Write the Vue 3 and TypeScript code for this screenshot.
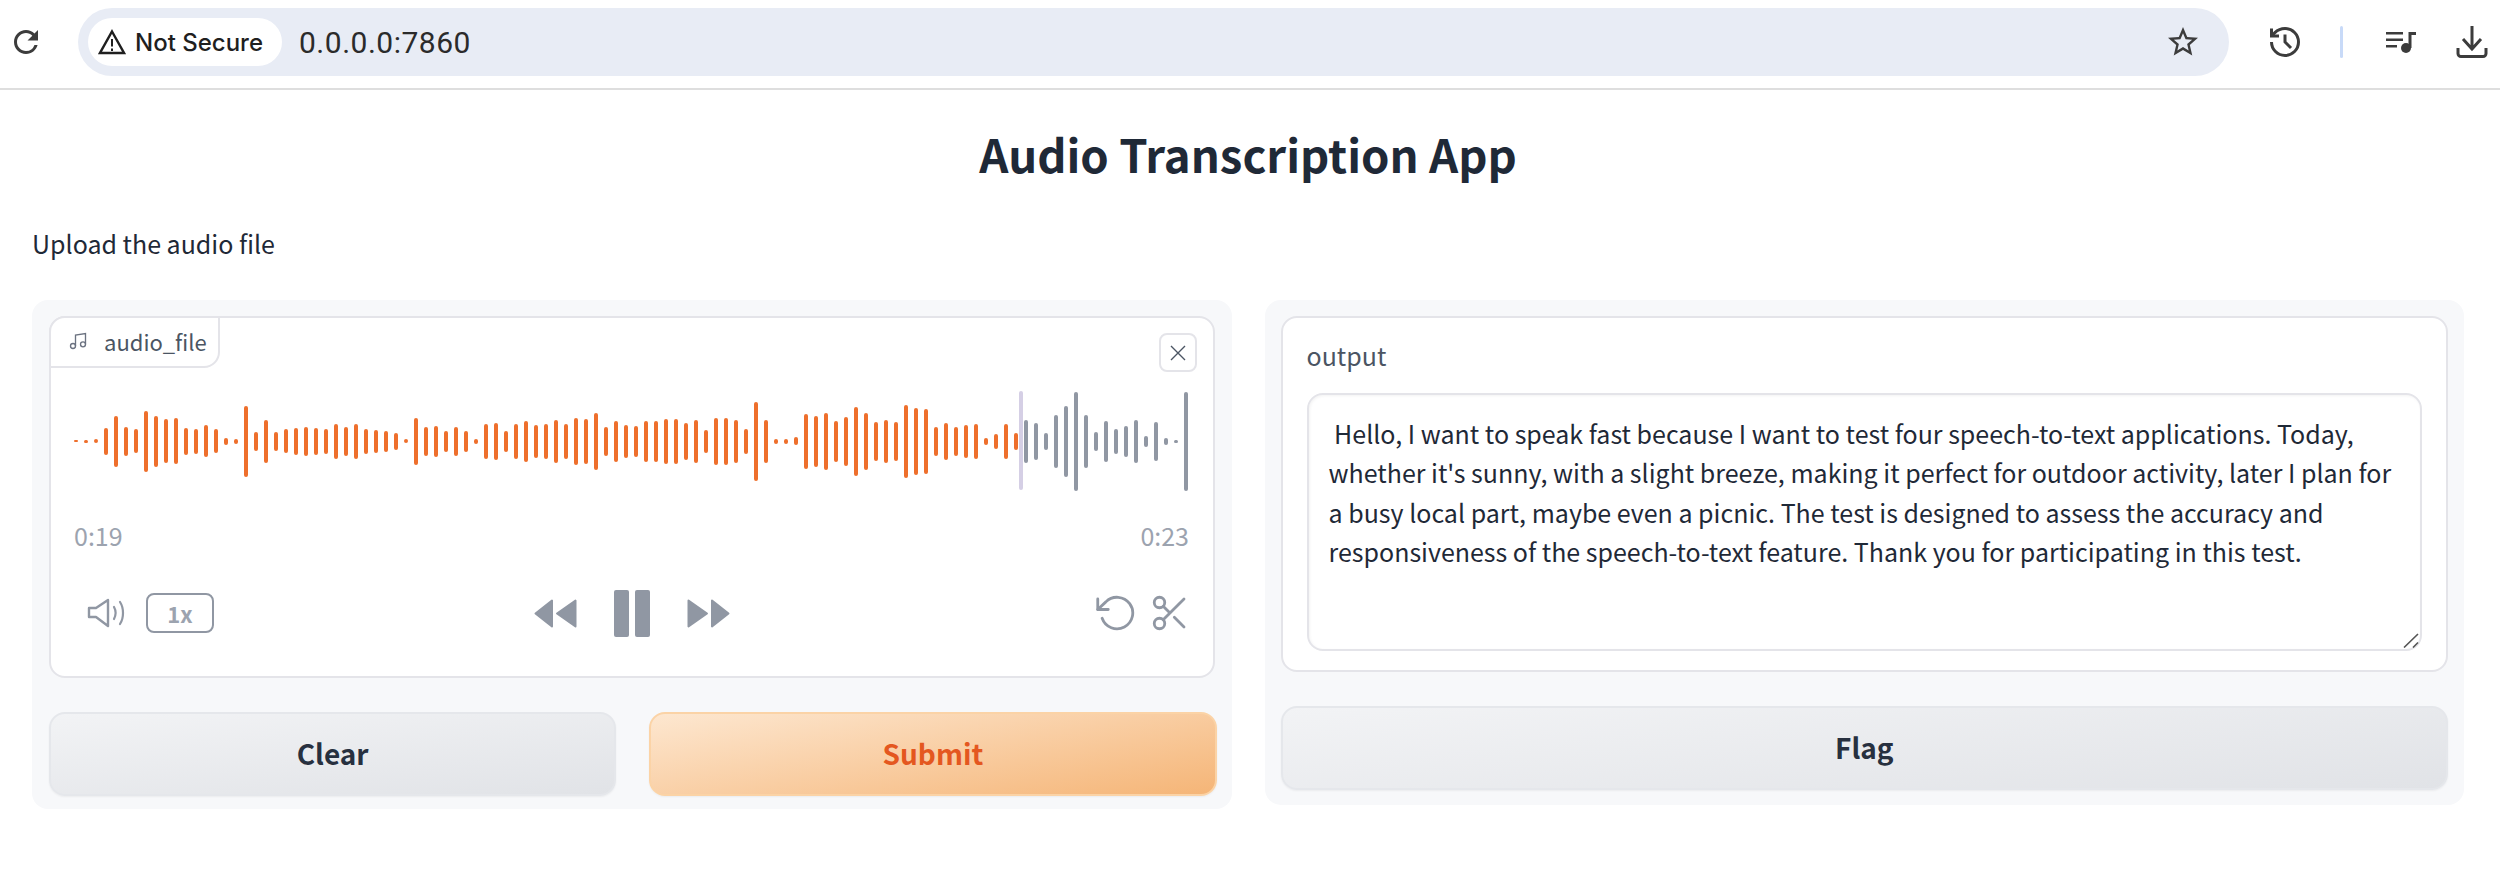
<script setup lang="ts">
const peaks = [
  2, 3, 4, 27, 51, 29, 24, 61, 51, 44, 46, 27, 25, 32, 24, 7, 5, 71, 19, 43,
  19, 24, 27, 29, 27, 25, 35, 29, 35, 25, 23, 21, 17, 4, 47, 29, 31, 21, 29, 21,
  5, 35, 37, 21, 35, 41, 33, 35, 43, 35, 47, 45, 57, 29, 41, 33, 31, 41, 41, 45,
  45, 37, 43, 23, 47, 47, 43, 25, 79, 43, 5, 5, 8, 55, 51, 57, 41, 49, 69, 57,
  39, 43, 39, 73, 67, 65, 29, 37, 29, 33, 35, 7, 15, 35, 17,
  43, 37, 17, 53, 71, 99, 53, 19, 41, 25, 31, 43, 11, 39, 7, 3, 99,
]
const PLAYED = 95

const transcript =
  " Hello, I want to speak fast because I want to test four speech-to-text applications. Today, whether it's sunny, with a slight breeze, making it perfect for outdoor activity, later I plan for a busy local part, maybe even a picnic. The test is designed to assess the accuracy and responsiveness of the speech-to-text feature. Thank you for participating in this test."
</script>

<template>
  <div class="page">
    <header class="browser">
      <svg class="reload" viewBox="0 0 24 24" width="36" height="36">
        <path fill="#3c3c3c" d="M17.65 6.35A7.958 7.958 0 0 0 12 4c-4.42 0-7.99 3.58-7.99 8s3.57 8 7.99 8c3.73 0 6.84-2.55 7.73-6h-2.08A5.99 5.99 0 0 1 12 18c-3.31 0-6-2.69-6-6s2.69-6 6-6c1.66 0 3.14.69 4.22 1.78L13 11h7V4l-2.35 2.35z" />
      </svg>
      <div class="address">
        <div class="secure">
          <svg viewBox="0 0 28 26" width="28" height="26" fill="none" stroke="#1f1f1f" stroke-width="2.4" stroke-linejoin="miter">
            <path d="M14 2.5 26 24H2z" />
            <path d="M14 10v7.5M14 19.5v2.5" stroke-width="2" />
          </svg>
          <span>Not Secure</span>
        </div>
        <span class="url">0.0.0.0:7860</span>
        <svg class="star" viewBox="0 0 24 24" width="36" height="36">
          <path fill="#3c3c3c" d="M22 9.24l-7.19-.62L12 2 9.19 8.63 2 9.24l5.46 4.73L5.82 21 12 17.27 18.18 21l-1.63-7.03L22 9.24zM12 15.4l-3.76 2.27 1-4.28-3.32-2.88 4.38-.38L12 6.1l1.71 4.04 4.38.38-3.32 2.88 1 4.28L12 15.4z" />
        </svg>
      </div>
      <div class="tools">
        <svg viewBox="0 0 24 24" width="36" height="36" fill="none" stroke="#3c3c3c" stroke-width="2">
          <path d="M3 12a9 9 0 1 0 9-9 9.75 9.75 0 0 0-6.74 2.74L3 8" />
          <path d="M3 3v5h5M12 7v5l4 4" />
        </svg>
        <span class="sep"></span>
        <svg viewBox="0 0 30 24" width="30" height="24">
          <path fill="#3c3c3c" d="M0 2h17v2.6H0zM0 8.5h17v2.6H0zM0 15h11v2.6H0z" />
          <circle cx="20" cy="18" r="5" fill="#3c3c3c" />
          <path fill="#3c3c3c" d="M22.5 2H30v3h-4.5v13h-3z" />
        </svg>
        <svg viewBox="0 0 32 32" width="32" height="32" fill="none" stroke="#3c3c3c" stroke-width="3">
          <path d="M16 0v23M7 13l9 10 9-10" />
          <path d="M2 22v5.5a3 3 0 0 0 3 3h22a3 3 0 0 0 3-3V22" />
        </svg>
      </div>
    </header>

    <main class="app">
      <h1>Audio Transcription App</h1>
      <p class="desc">Upload the audio file</p>

      <div class="columns">
        <section class="panel left">
          <div class="card audio">
            <div class="tab">
              <svg viewBox="0 0 24 24" width="20" height="20" fill="none" stroke="#6b7280" stroke-width="1.6">
                <path d="M9 18V5l12-2v13" />
                <circle cx="6" cy="18" r="3" />
                <circle cx="18" cy="16" r="3" />
              </svg>
              <span>audio_file</span>
            </div>
            <button class="close">
              <svg viewBox="0 0 16 16" width="16" height="16" fill="none" stroke="#4b5563" stroke-width="1.4">
                <path d="M1 1l14 14M15 1 1 15" />
              </svg>
            </button>

            <div class="wave">
              <i
                v-for="(h, i) in peaks"
                :key="i"
                :class="{ done: i < PLAYED }"
                :style="{ height: h + 'px' }"
              ></i>
              <b class="cursor"></b>
            </div>

            <div class="times">
              <span>0:19</span>
              <span>0:23</span>
            </div>

            <div class="controls">
              <div class="ctl-left">
                <svg viewBox="0 0 40 30" width="40" height="30" fill="none" stroke="#9097a3" stroke-width="2.4" stroke-linejoin="round" stroke-linecap="round">
                  <path d="M2 10v9h7l12 9V2L9 10z" />
                  <path d="M27 9c2 3.500 2 8 0 12M33 4c4 6 4 16 0 22" stroke-width="2.2" />
                </svg>
                <span class="rate">1x</span>
              </div>
              <div class="ctl-mid">
                <svg viewBox="0 0 43 29" width="43" height="29" fill="#9097a3" stroke="#9097a3" stroke-width="2" stroke-linejoin="round">
                  <path d="M1.500 14.500 18 1.500v26zM23 14.500 41.500 1.500v26z" />
                </svg>
                <div class="pause"><span></span><span></span></div>
                <svg viewBox="0 0 43 29" width="43" height="29" fill="#9097a3" stroke="#9097a3" stroke-width="2" stroke-linejoin="round">
                  <path d="M1.500 1.500 20 14.500 1.500 27.500zM25 1.500 41.500 14.500 25 27.500z" />
                </svg>
              </div>
              <div class="ctl-right">
                <svg viewBox="0 0 24 24" width="42" height="42" fill="none" stroke="#9097a3" stroke-width="1.6" stroke-linecap="round" stroke-linejoin="round">
                  <path d="M1 4v6h6" />
                  <path d="M3.510 15a9 9 0 1 0 2.130-9.360L1 10" />
                </svg>
                <svg viewBox="0 0 24 24" width="42" height="42" fill="none" stroke="#9097a3" stroke-width="1.6" stroke-linecap="round" stroke-linejoin="round">
                  <circle cx="6" cy="6" r="3" />
                  <circle cx="6" cy="18" r="3" />
                  <path d="M20 4 8.120 15.880M14.470 14.480 20 20M8.120 8.120 12 12" />
                </svg>
              </div>
            </div>
          </div>

          <div class="actions">
            <button class="btn">Clear</button>
            <button class="btn primary">Submit</button>
          </div>
        </section>

        <section class="panel right">
          <div class="card output">
            <label for="out">output</label>
            <textarea id="out" readonly :value="transcript"></textarea>
            <svg class="grip" viewBox="0 0 16 15" width="16" height="15" fill="none" stroke="#555" stroke-width="1.6">
              <path d="M1 14.500 15 1M10 14.500l5-5" />
            </svg>
          </div>
          <button class="btn flag">Flag</button>
        </section>
      </div>
    </main>
  </div>
</template>

<style scoped>
.page {
  width: 2500px;
  height: 876px;
  overflow: hidden;
  background: #fff;
  font-family: "Noto Sans CJK SC", "Noto Sans", sans-serif;
  color: #1f2937;
}

.browser {
  display: flex;
  align-items: center;
  height: 84px;
  padding-bottom: 4px;
  border-bottom: 2px solid #dedede;
  box-sizing: content-box;
}

.reload {
  margin-left: 8px;
  margin-right: 34px;
  flex: none;
}

.address {
  display: flex;
  align-items: center;
  width: 2151px;
  height: 68px;
  border-radius: 34px;
  background: #e8ecf5;
  padding-left: 10px;
  box-sizing: border-box;
}

.secure {
  display: flex;
  align-items: center;
  gap: 9px;
  height: 48px;
  width: 194px;
  padding-left: 10px;
  box-sizing: border-box;
  border-radius: 24px;
  background: #fff;
  font: 500 24px Inter, sans-serif;
  color: #1f1f1f;
}

.url {
  margin-left: 17px;
  font: 400 30px Roboto, sans-serif;
  color: #2b2b2b;
  letter-spacing: 0.5px;
}

.star {
  margin-left: auto;
  margin-right: 28px;
}

.tools {
  display: flex;
  align-items: center;
  margin-left: 38px;
}

.sep {
  width: 3px;
  height: 32px;
  margin: 0 43px 0 37px;
  border-radius: 2px;
  background: #c8daf8;
}

.tools svg:last-child {
  margin-left: 40px;
}

.app {
  padding: 0 36px 0 32px;
}

h1 {
  margin: 35px 0 0;
  text-align: center;
  font-size: 45.5px;
  line-height: 56px;
  font-weight: 700;
  color: #1f2937;
}

.desc {
  margin: 44px 0 0;
  font-size: 25px;
  line-height: 36px;
  color: #1f2937;
}

.columns {
  display: grid;
  grid-template-columns: 1fr 1fr;
  gap: 33px;
  align-items: start;
  margin-top: 39px;
}

.panel {
  border-radius: 16px;
  background: #f7f8fa;
  box-sizing: border-box;
}

.panel.left {
  padding: 16px 15px 13px 17px;
}

.panel.right {
  padding: 16px 16px 15px 16px;
}

.card {
  position: relative;
  border: 2px solid #e4e4e9;
  border-radius: 16px;
  background: #fff;
  box-sizing: border-box;
}

.audio {
  width: 1166px;
  height: 362px;
}

.tab {
  display: flex;
  align-items: center;
  gap: 16px;
  width: 171px;
  height: 52px;
  margin: -2px 0 0 -2px;
  padding: 0 0 2px 17px;
  box-sizing: border-box;
  border: 2px solid #e4e4e9;
  border-radius: 16px 0 16px 0;
  background: #fff;
  font-size: 22px;
  color: #4b5563;
}

.close {
  position: absolute;
  top: 15px;
  right: 16px;
  display: flex;
  align-items: center;
  justify-content: center;
  width: 38px;
  height: 39px;
  padding: 0;
  border: 2px solid #e4e4e9;
  border-radius: 8px;
  background: #fff;
}

.wave {
  position: relative;
  display: flex;
  align-items: center;
  gap: 6px;
  height: 100px;
  margin: 23px 0 0 23px;
}

.wave i {
  flex: none;
  width: 4px;
  border-radius: 2px;
  background: #9097a3;
}

.wave i.done {
  background: #ee6f2c;
}

.cursor {
  position: absolute;
  left: 945px;
  top: 0;
  width: 4px;
  height: 99px;
  border-radius: 2px;
  background: #d5cfe5;
}

.times {
  display: flex;
  justify-content: space-between;
  margin: 26px 24px 0 23px;
  font-size: 25px;
  line-height: 36px;
  color: #9ca3af;
}

.controls {
  display: grid;
  grid-template-columns: 1fr auto 1fr;
  align-items: center;
  height: 48px;
  margin-top: 36px;
  padding: 0 22px;
}

.ctl-left {
  display: flex;
  align-items: center;
  gap: 19px;
  margin-left: 14px;
}

.rate {
  display: flex;
  align-items: center;
  justify-content: center;
  width: 68px;
  height: 40px;
  box-sizing: border-box;
  border: 2px solid #9097a3;
  border-radius: 8px;
  font-size: 22px;
  font-weight: 700;
  color: #9ca3af;
}

.ctl-mid {
  display: flex;
  align-items: center;
  gap: 37px;
}

.pause {
  display: flex;
  gap: 6px;
}

.pause span {
  width: 15px;
  height: 47px;
  border-radius: 2px;
  background: #9097a3;
}

.ctl-right {
  display: flex;
  justify-content: flex-end;
  gap: 11px;
}

.actions {
  display: grid;
  grid-template-columns: 1fr 1fr;
  gap: 33px;
  margin-top: 34px;
}

.btn {
  display: block;
  width: 100%;
  height: 84px;
  padding: 0 0 3px;
  border: 2px solid #e5e7eb;
  border-radius: 16px;
  background: linear-gradient(174deg, #f2f3f5, #e1e3e7);
  box-shadow: 0 1px 2px rgba(0, 0, 0, 0.05);
  font-family: inherit;
  font-size: 28px;
  font-weight: 700;
  color: #27303f;
}

.btn.primary {
  border-color: #fbd3a6;
  background: linear-gradient(170deg, #fde7d0, #f5b577);
  color: #e4571f;
}

.btn.flag {
  margin-top: 34px;
}

.output {
  height: 356px;
  padding: 19px 24px 0 24px;
}

.output label {
  display: block;
  font-size: 25px;
  line-height: 36px;
  color: #4b5563;
}

.output textarea {
  display: block;
  width: 100%;
  height: 258px;
  margin-top: 20px;
  padding: 19px 20px;
  box-sizing: border-box;
  border: 2px solid #e4e4e9;
  border-radius: 16px;
  outline: none;
  resize: none;
  background: #fff;
  box-shadow: inset 1px 1px 3px rgba(0, 0, 0, 0.05);
  font-family: inherit;
  font-size: 25px;
  line-height: 39.3px;
  color: #1f2937;
}

.grip {
  position: absolute;
  right: 27px;
  bottom: 22px;
}
</style>

<style>
body {
  margin: 0;
}
</style>
